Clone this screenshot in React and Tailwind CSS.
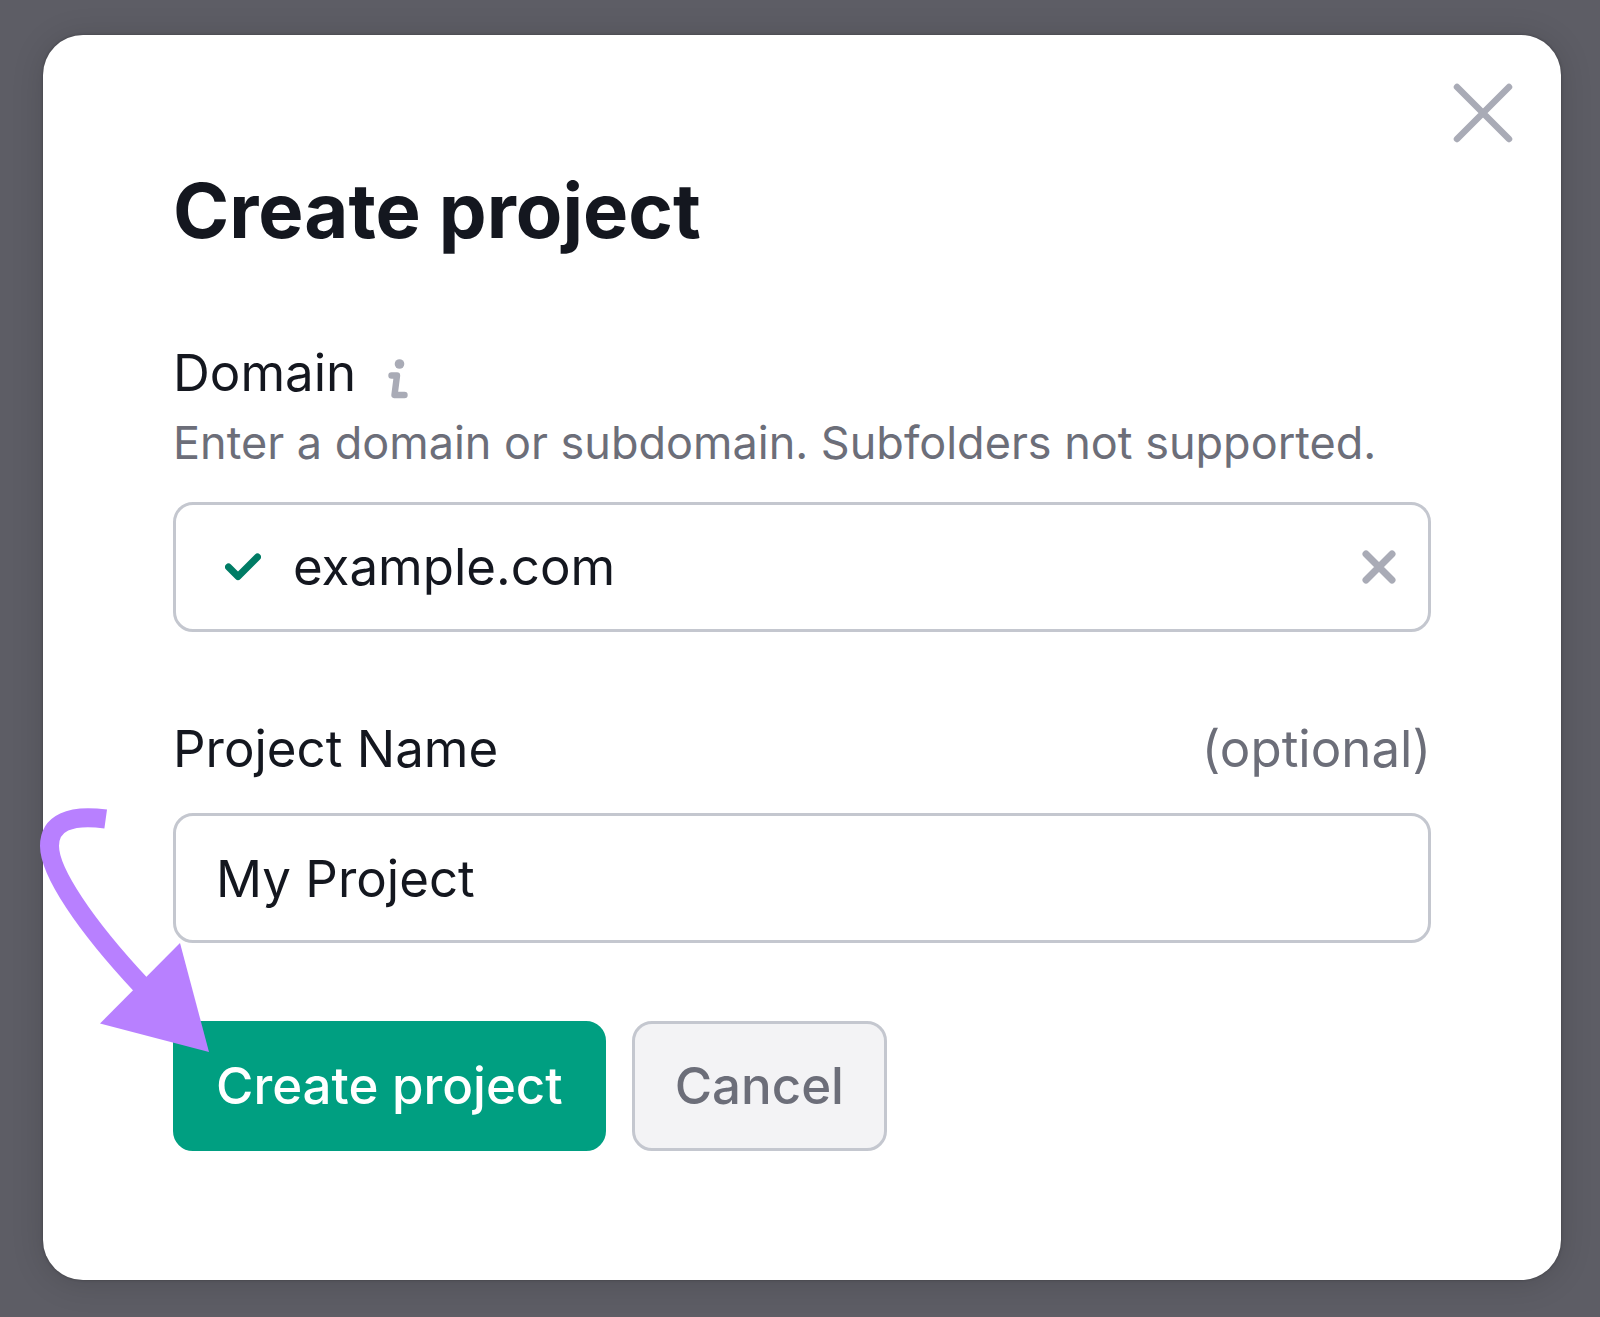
import React, { useState } from "react";

export default function App() {
  const [domain, setDomain] = useState("example.com");
  const [name, setName] = useState("My Project");

  return (
    <div className="min-h-screen bg-[#5d5d65] pt-[35px] pr-[39px] pb-9 pl-[43px] font-['Inter',sans-serif] text-[#14171f]">
      <div
        role="dialog"
        aria-labelledby="dialog-title"
        className="relative rounded-[40px] bg-white px-[130px] pt-[127px] pb-[129px] shadow-[0_3px_32px_rgba(0,0,0,0.15),0_0_3px_rgba(0,0,0,0.3)]"
      >
        <button
          type="button"
          aria-label="Close"
          className="absolute top-12 right-12 text-[#a9abb6]"
        >
          <svg
            className="w-[60px] h-[60px]"
            fill="none"
            stroke="currentColor"
            strokeWidth="6.5"
            strokeLinecap="round"
            viewBox="0 0 60 60"
          >
            <path d="M4 4l52 52M56 4L4 56" />
          </svg>
        </button>

        <h1
          id="dialog-title"
          className="text-[76px] leading-[96px] font-bold mb-[76px]"
        >
          Create project
        </h1>

        <form onSubmit={(e) => e.preventDefault()}>
          {/* Domain */}
          <div className="flex items-center gap-8 text-[51px] leading-[78px]">
            <label htmlFor="domain">Domain</label>
            <button type="button" aria-label="Domain info">
              <svg
                className="w-5 h-10 mt-3"
                fill="none"
                stroke="#a9abb6"
                strokeWidth="6.4"
                strokeLinecap="round"
                strokeLinejoin="round"
                viewBox="0 0 20 40"
              >
                <circle cx="11.5" cy="5" r="4.8" fill="#a9abb6" stroke="none" />
                <path d="M3.5 16.5H9L6.5 36H16.5" />
              </svg>
            </button>
          </div>
          <p
            id="domain-hint"
            className="text-[45px] leading-[62px] text-[#6c6e79] mb-7"
          >
            Enter a domain or subdomain. Subfolders not supported.
          </p>
          <div className="flex items-center h-[130px] rounded-[20px] border-3 border-[#c4c7cf] pl-[49px] pr-8 mb-[78px]">
            <svg
              className="w-9 h-7 mr-8 shrink-0"
              fill="none"
              stroke="#007c65"
              strokeWidth="7"
              strokeLinecap="round"
              strokeLinejoin="round"
              viewBox="0 0 36 28"
            >
              <path d="M3.5 14L13 23.5L32.5 4" />
            </svg>
            <input
              id="domain"
              type="text"
              aria-describedby="domain-hint"
              value={domain}
              onChange={(e) => setDomain(e.target.value)}
              className="flex-1 min-w-0 text-[51px] leading-[78px] outline-none"
            />
            <button
              type="button"
              aria-label="Clear domain"
              onClick={() => setDomain("")}
            >
              <svg
                className="w-[34px] h-[34px]"
                fill="none"
                stroke="#a9abb6"
                strokeWidth="7"
                strokeLinecap="round"
                viewBox="0 0 34 34"
              >
                <path d="M4 4l26 26M30 4L4 30" />
              </svg>
            </button>
          </div>

          {/* Project name */}
          <div className="flex justify-between text-[51px] leading-[78px] mb-[25px]">
            <label htmlFor="project-name">Project Name</label>
            <span className="text-[#6c6e79]">(optional)</span>
          </div>
          <input
            id="project-name"
            type="text"
            value={name}
            onChange={(e) => setName(e.target.value)}
            className="block w-full h-[130px] rounded-[20px] border-3 border-[#c4c7cf] px-10 mb-[78px] text-[51px] leading-[78px] outline-none"
          />

          {/* Actions */}
          <div className="relative flex gap-[26px] text-[51px] leading-[78px] font-medium">
            <button
              type="submit"
              className="h-[130px] rounded-[20px] border-3 border-[#009f81] bg-[#009f81] px-10 text-white"
            >
              Create project
            </button>
            <button
              type="button"
              className="h-[130px] rounded-[20px] border-3 border-[#c4c7cf] bg-[#f3f3f5] px-10 text-[#6c6e79]"
            >
              Cancel
            </button>

            {/* Arrow pointing at the submit button */}
            <svg
              className="absolute -left-[133px] -top-[213px] w-[170px] h-[245px] pointer-events-none"
              fill="none"
              viewBox="40 808 170 245"
              aria-hidden="true"
            >
              <path
                d="M105.7 819C70 814 49.5 823 49.5 846C49.5 872 85 925 141 985"
                stroke="#b880ff"
                strokeWidth="19"
              />
              <path d="M180 943L209 1052L100 1023.5Z" fill="#b880ff" />
            </svg>
          </div>
        </form>
      </div>
    </div>
  );
}
